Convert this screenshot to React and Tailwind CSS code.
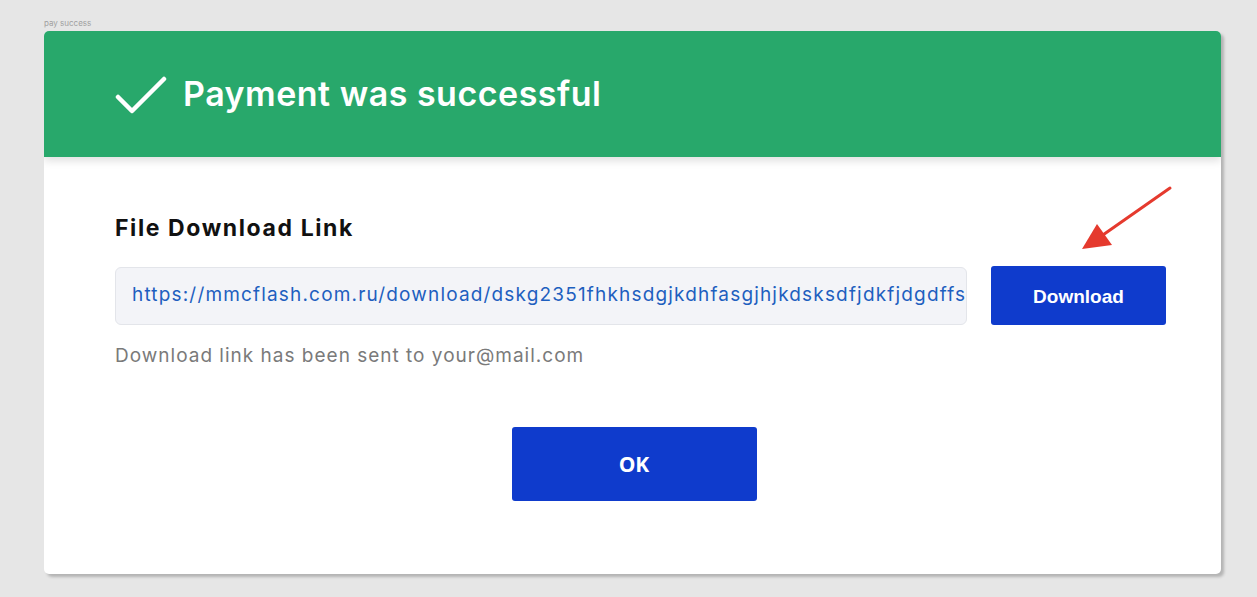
import React from "react";

export default function App() {
  return (
    <div className="w-[1257px] h-[597px] bg-[#e6e6e6] pl-[44px] pt-[17px] overflow-hidden" style={{ fontFamily: "Inter, 'Noto Sans', sans-serif" }}>
      <div className="text-[8px] leading-[12px] text-[#a0a0a0] h-[14px]">pay success</div>
      <div className="relative w-[1177px] h-[543px] bg-white rounded-[5px] shadow-[3px_3px_3px_rgba(0,0,0,0.22)] overflow-hidden">
        <div className="h-[126px] bg-[#28a86b] flex items-center pl-[71px] gap-[16px] shadow-[0_4px_8px_rgba(0,0,0,0.12)] relative">
          <svg width="52" height="40" viewBox="0 0 52 40" className="mt-[2px]">
            <path d="M3 22 L17 36 L49 4" fill="none" stroke="white" strokeWidth="4.5" strokeLinecap="round" strokeLinejoin="round" />
          </svg>
          <div className="text-white text-[34px] font-semibold leading-[40px] tracking-[0.5px]">Payment was successful</div>
        </div>
        <div className="pl-[71px] pr-[55px] pt-[57px] flex flex-col">
          <div className="text-[23px] leading-[28px] font-bold text-[#111] tracking-[1.6px]">File Download Link</div>
          <div className="flex items-center gap-[24px] mt-[24px]">
            <div className="w-[852px] h-[58px] bg-[#f3f4f8] border border-[#e3e5ea] rounded-[6px] flex items-center pl-[16px] pr-[2px] overflow-hidden">
              <span className="text-[19px] text-[#1e5fbf] whitespace-nowrap tracking-[1.17px]">https://mmcflash.com.ru/download/dskg2351fhkhsdgjkdhfasgjhjkdsksdfjdkfjdgdffs</span>
            </div>
            <button className="w-[175px] h-[59px] bg-[#0f3bcc] rounded-[3px] text-white text-[19px] font-bold pt-[3px]" style={{ fontFamily: "'Liberation Sans', Arial, sans-serif" }}>Download</button>
          </div>
          <div className="mt-[19px] text-[19px] leading-[24px] text-[#7a7a7a] tracking-[1px]">Download link has been sent to your@mail.com</div>
          <div className="flex justify-center mt-[59px]">
            <button className="ml-[-13px] w-[245px] h-[74px] bg-[#0f3bcc] rounded-[3px] text-white text-[21px] font-bold pt-[2px]" style={{ fontFamily: "'Open Sans', sans-serif" }}>OK</button>
          </div>
        </div>
        <svg className="absolute left-[1026px] top-[149px]" width="110" height="80" viewBox="0 0 110 80">
          <line x1="100" y1="8" x2="30" y2="57" stroke="#e53a2e" strokeWidth="3" strokeLinecap="round" />
          <path d="M12 69 L27 44 L42 65 Z" fill="#e53a2e" />
        </svg>
      </div>
    </div>
  );
}
